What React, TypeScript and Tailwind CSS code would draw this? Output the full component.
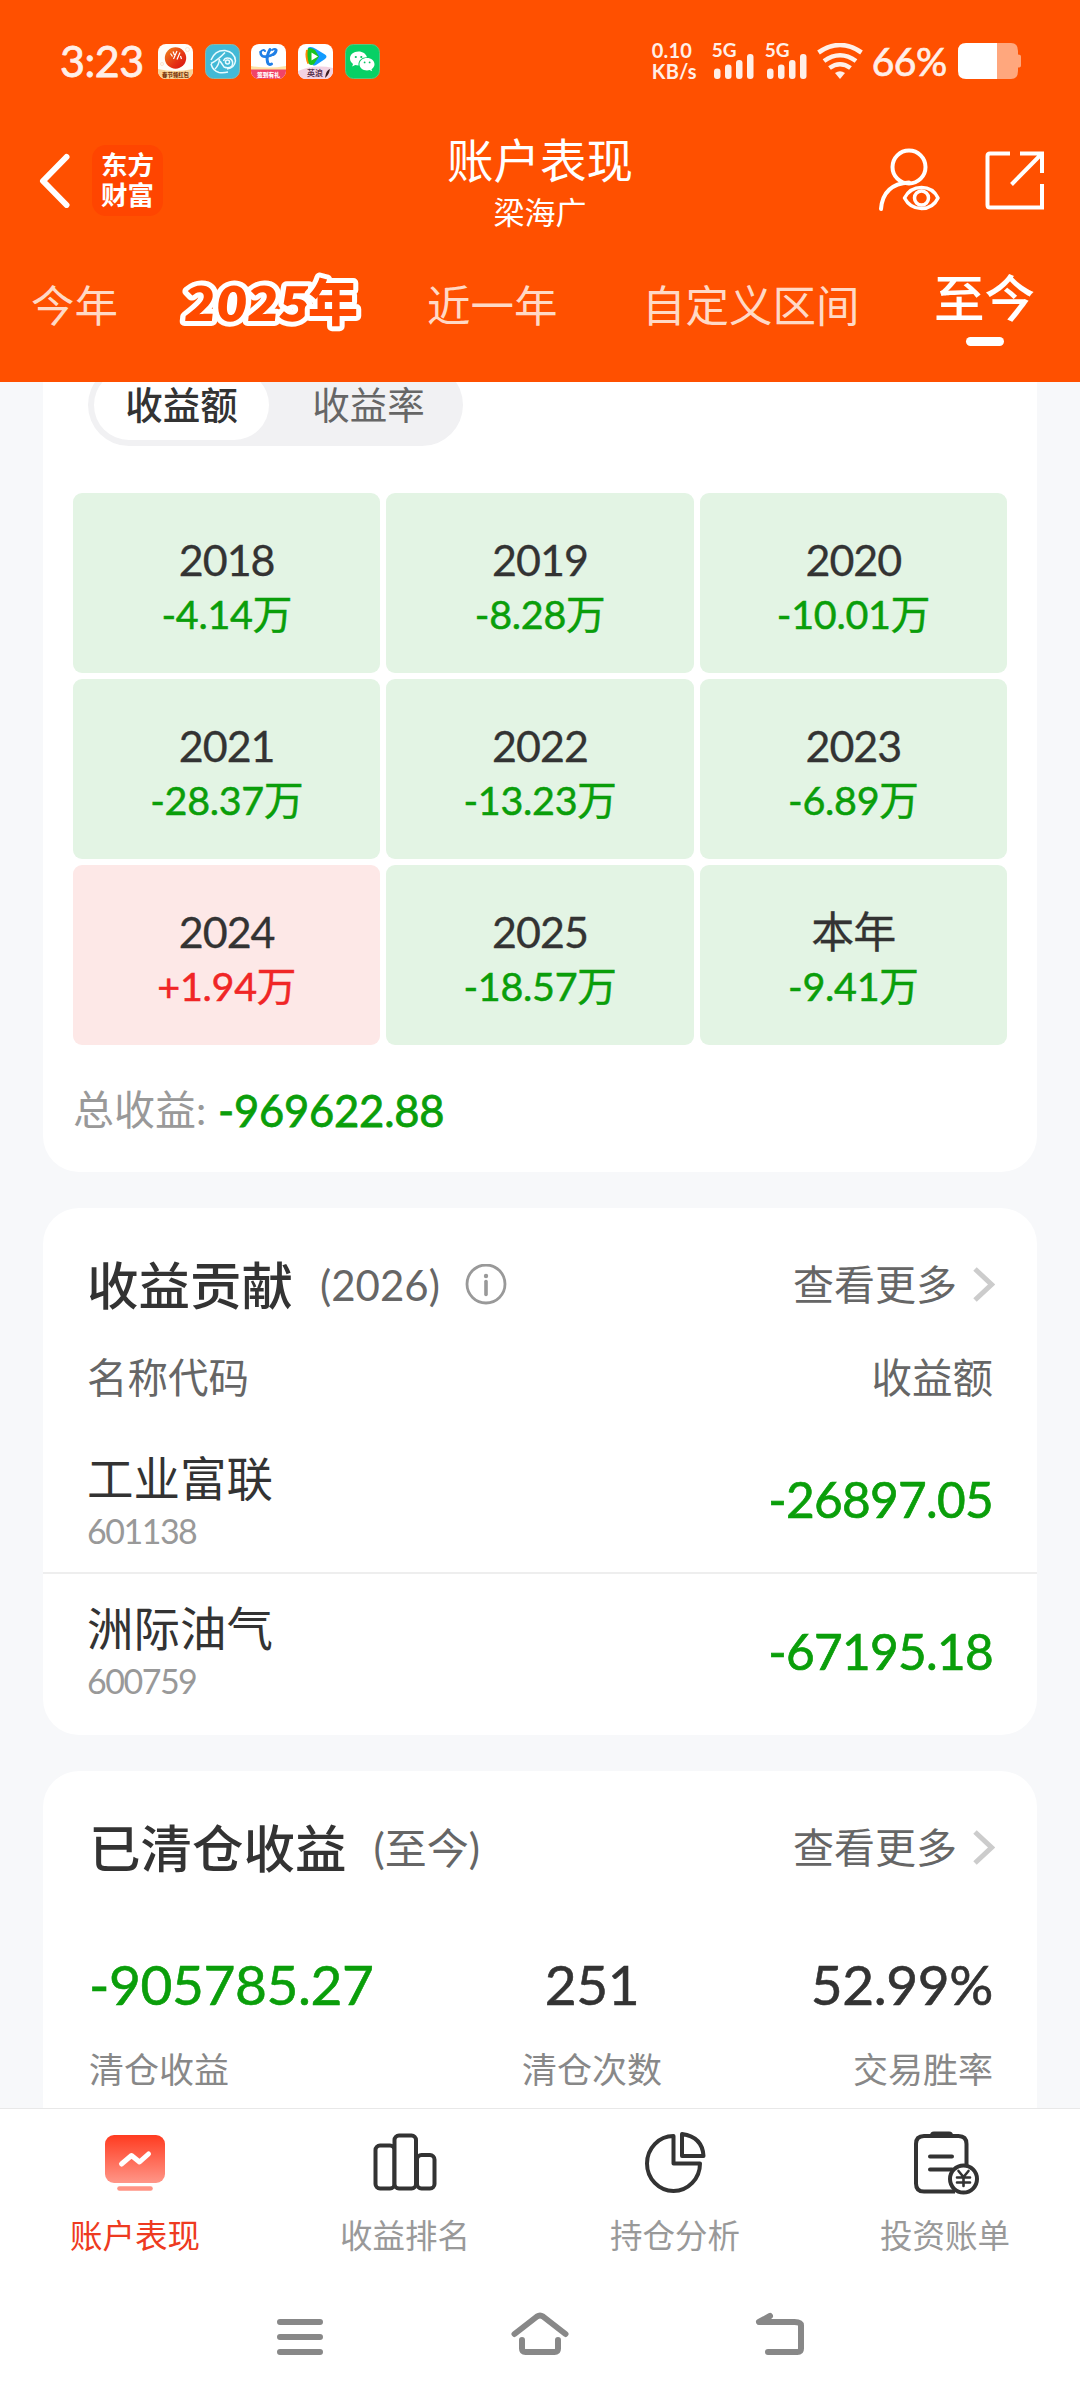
import type { ReactNode } from "react";

const years = [
  { year: "2018", value: "-4.14万" },
  { year: "2019", value: "-8.28万" },
  { year: "2020", value: "-10.01万" },
  { year: "2021", value: "-28.37万" },
  { year: "2022", value: "-13.23万" },
  { year: "2023", value: "-6.89万" },
  { year: "2024", value: "+1.94万" },
  { year: "2025", value: "-18.57万" },
  { year: "本年", value: "-9.41万" },
];

const stocks = [
  { name: "工业富联", code: "601138", value: "-26897.05" },
  { name: "洲际油气", code: "600759", value: "-67195.18" },
];

const AppIcons = () => (
  <div className="flex gap-[11.7px]">
    {/* 东方财富 */}
    <svg width="35" height="35" viewBox="0 0 35 35">
      <defs>
        <linearGradient id="ball" x1="0" y1="0" x2="1" y2="1">
          <stop offset="0" stopColor="#f0861c" />
          <stop offset="0.6" stopColor="#e63312" />
          <stop offset="1" stopColor="#d50f12" />
        </linearGradient>
        <clipPath id="tile">
          <rect width="35" height="35" rx="8" />
        </clipPath>
      </defs>
      <g clipPath="url(#tile)">
        <rect width="35" height="35" fill="#fffdf8" />
        <path d="M0 25Q17 29 35 25V35H0z" fill="#f9d295" />
        <circle cx="29.500" cy="5.500" r="2" fill="none" stroke="#fbe6d0" />
        <circle cx="4" cy="20" r="1.500" fill="none" stroke="#fbe6d0" />
        <circle cx="17.500" cy="14" r="10.700" fill="url(#ball)" />
        <path
          d="M12.500 9.500l2 3M15 7.500l1.500 3.500M19 7l-3.500 8M22 8.500l-3 7M22.500 12l1 3"
          stroke="#fff"
          strokeWidth="1.200"
          fill="none"
        />
        <text x="17.500" y="33" fontSize="5.400" fontWeight="900" fill="#7c3a10" textAnchor="middle">
          春节领红包
        </text>
      </g>
    </svg>
    <svg width="35" height="35" viewBox="0 0 35 35">
      <rect x=".5" y=".5" width="34" height="34" rx="8" fill="#43b9d6" stroke="#8cb8a8" />
      <g fill="none" stroke="#e8fbff" strokeWidth="1.500">
        <path d="M6 16Q10 6 20 6.500Q30 8 30.500 17Q29.500 24 22 25M6 20Q8 27 14 28.500Q19 29 23 28" />
        <path d="M6 19.500Q13 16 20 8.500M10 25Q14 21 14.500 15" />
        <path d="M15 17L19 23Q24 25 27 22Q29 17 25 14.500Q20 13 18.500 17" />
        <circle cx="22.500" cy="18" r="2" />
      </g>
    </svg>
    <svg width="35" height="35" viewBox="0 0 35 35">
      <g clipPath="url(#tile)">
        <rect width="35" height="35" fill="#fff" />
        <path d="M0 22Q17 25 35 22V28H0z" fill="#fde3a5" />
        <rect y="25.500" width="35" height="10" fill="#f04468" />
        <g fill="none" stroke="#1f7fe6" strokeLinecap="round">
          <path d="M9.500 8Q9.500 13.500 16 12.500Q24 11 25 6" strokeWidth="2.600" />
          <path d="M10 7.500Q12 5 14 7M21 6Q24 4 25.500 6Q25.500 9.500 22 11" strokeWidth="2" />
          <path d="M19 5.500Q15 12 16.500 18Q17.500 21.500 20.500 20" strokeWidth="3" />
        </g>
        <text x="17.500" y="33" fontSize="5.800" fontWeight="900" fill="#fff" textAnchor="middle">
          签到有礼
        </text>
      </g>
    </svg>
    <svg width="35" height="35" viewBox="0 0 35 35">
      <g clipPath="url(#tile)">
        <rect width="35" height="35" fill="#fff" />
        <path d="M0 27Q17 20 35 24V35H0z" fill="#f3d3e2" />
        <path d="M8 6Q6.500 13 9.500 20L12 19V5z" fill="#ff8a00" />
        <path d="M9.500 4.500Q12 1.500 18 5L27 10.500Q30 12.500 27 15L18 21Q13 23 15 18V8z" fill="#119bff" />
        <path d="M10 4.500Q12 3 17 6L21 12.500L16 20Q13 22 11 20Q8.500 12 10 4.500z" fill="#19c421" />
        <path d="M13.500 8.500L20 12.500L13.500 16.500z" fill="#fff" />
        <text x="17" y="32" fontSize="8" fontWeight="700" fill="#5a3550" textAnchor="middle">
          英浪
        </text>
        <path d="M27 34Q28 26 32 25Q31 31 27 34" fill="#3b1c20" />
      </g>
    </svg>
    {/* 微信 */}
    <svg width="35" height="35" viewBox="0 0 35 35">
      <rect x=".5" y=".5" width="34" height="34" rx="8" fill="#07d065" stroke="#5cc47c" />
      <path d="M13.500 7.500c-5 0-8.500 3.100-8.500 7 0 2.300 1.200 4.100 3 5.400l-.8 2.600 3-1.500c1 .3 2.100.5 3.300.5-.5-5.500 4-8.500 8.500-8.200-.8-3.500-4.300-5.800-8.500-5.800z" fill="#fff" />
      <path d="M22 14c-4.200 0-7.500 2.700-7.500 6.200s3.300 6.200 7.500 6.200c.9 0 1.800-.1 2.600-.4l2.600 1.300-.7-2.100c1.800-1.200 3-2.900 3-5 0-3.500-3.300-6.200-7.500-6.200z" fill="#fff" />
      <g fill="#07c160">
        <circle cx="10.800" cy="13" r="1.100" />
        <circle cx="16.300" cy="13" r="1.100" />
        <circle cx="19.600" cy="18.400" r=".9" />
        <circle cx="24.600" cy="18.400" r=".9" />
      </g>
    </svg>
  </div>
);

const Signal = () => (
  <div className="relative h-9 w-[42px]">
    <span className="absolute -top-px left-0 text-[19px] leading-4 font-bold">5G</span>
    <svg className="absolute top-0 left-0" width="42" height="36" viewBox="0 0 42 36" fill="currentColor">
      <rect x="2" y="25.500" width="6.500" height="10.500" rx="3" />
      <rect x="13" y="21.500" width="6.500" height="14.500" rx="3" />
      <rect x="24" y="17" width="6.500" height="19" rx="3" />
      <rect x="35" y="11" width="6.500" height="25" rx="3" />
    </svg>
  </div>
);

const StatusBar = () => (
  <div className="flex h-[122px] items-center pl-[60px] text-[#ffefe8]">
    <span className="w-[98px] text-[43px] leading-[44px] tracking-[-0.5px] [-webkit-text-stroke:0.8px]">3:23</span>
    <AppIcons />
    <div className="ml-[272px] w-[60px] text-[20px] leading-[21px] font-bold tracking-[0.2px]">
      <div>0.10</div>
      <div>KB/s</div>
    </div>
    <Signal />
    <div className="w-[11px]" />
    <Signal />
    <svg className="ml-[10px]" width="46" height="36" viewBox="0 0 46 36" fill="none" stroke="currentColor" strokeWidth="4.600">
      <path d="M1.500 9.500Q23-5.500 44.500 9.500M7 18Q23 6.500 39 18M12.500 25Q23 17.500 33.500 25" />
      <path d="M18 30Q23 26.500 28 30L23 36z" fill="currentColor" stroke="none" />
    </svg>
    <span className="ml-[9px] w-[86px] text-[39px] leading-[40px] tracking-[-0.5px] [-webkit-text-stroke:0.7px]">66%</span>
    <svg width="64" height="36" viewBox="0 0 64 36">
      <path d="M39 0h14q7 0 7 8v3.500q3 0 3 2v9q0 2-3 2V28q0 8-7 8H39z" fill="#ffa77d" />
      <path d="M39 0H8Q0 0 0 8v20q0 8 8 8h31z" fill="#fff" />
    </svg>
  </div>
);

// outlined campaign lettering used for the yearly review tab
const YearBadge = () => (
  <svg
    className="mt-[26px] mr-[58px] overflow-visible"
    width="190"
    height="80"
    viewBox="0 -10 190 80"
    fill="#ff4a00"
    stroke="#fff"
    strokeWidth="10"
    strokeLinejoin="round"
    fontWeight="900"
    fontFamily="Noto Sans CJK SC, sans-serif"
    paintOrder="stroke"
  >
    <text transform="skewX(-6)" x="9" y="47" fontSize="48" textLength="126" lengthAdjust="spacingAndGlyphs">
      2025
    </text>
    <text x="129" y="47" fontSize="50">
      年
    </text>
  </svg>
);

const Header = () => (
  <header className="h-[382px] shrink-0 bg-[#ff5000] text-white">
    <StatusBar />
    <div className="flex h-[116px] items-start">
      <div className="flex h-full w-[320px] items-center pl-[39px]">
        <svg width="32" height="56" viewBox="0 0 32 56" fill="none" stroke="currentColor" strokeWidth="6" strokeLinecap="round" strokeLinejoin="round">
          <path d="M27.500 5L4 29L27.500 53" />
        </svg>
        <div className="ml-[21px] flex size-[71px] flex-col items-center justify-center rounded-[14px] bg-[#ff4500] text-[26.500px] leading-[30px] font-bold">
          <span>东方</span>
          <span>财富</span>
        </div>
      </div>
      <div className="flex-1 pt-2 text-center">
        <div className="text-[46.500px] leading-[60px]">账户表现</div>
        <div className="mt-[4px] text-[31px] leading-9">梁海广</div>
      </div>
      <div className="flex h-full w-[320px] items-center justify-end pr-[36px]">
        <svg width="64" height="64" viewBox="0 0 64 64" fill="none" stroke="currentColor" strokeWidth="4" strokeLinecap="round">
          <circle cx="32" cy="19" r="16.500" />
          <path d="M4 61Q6 36 32 34.500" />
          <path d="M27.500 50Q33 39.500 44.500 39.500Q56 39.500 61 50Q56 60.500 44.500 60.500Q33 60.500 27.500 50z" strokeWidth="3.500" strokeLinejoin="round" />
          <circle cx="44.500" cy="50" r="7" strokeWidth="3.500" />
        </svg>
        <svg className="ml-[43px]" width="60" height="60" viewBox="0 0 60 60" fill="none" stroke="currentColor" strokeWidth="4">
          <path d="M26 3.500H6Q3.500 3.500 3.500 6V55Q3.500 57.500 6 57.500H58V34M36 3.500H58V23M57 4.500L27.500 34.500" />
        </svg>
      </div>
    </div>
    <nav className="flex h-[144px] items-start text-[43.500px] leading-[134px] whitespace-nowrap text-[#ffd9c6]">
      <span className="ml-[31px] w-[148px]">今年</span>
      <YearBadge />
      <span className="w-[215px]">近一年</span>
      <span className="w-[292px]">自定义区间</span>
      <div className="flex flex-col items-center pt-[30px] text-white">
        <span className="text-[50.500px] leading-[60px] font-medium">至今</span>
        <div className="mt-[9px] h-[9px] w-[38px] rounded-full bg-white" />
      </div>
    </nav>
  </header>
);

const YearCard = () => (
  <section className="h-[808px] rounded-b-[36px] bg-white px-[30px]">
    <div className="-mt-[18px] ml-[15px] flex h-[82px] w-[375px] rounded-full bg-[#f1f1f3] p-[6px] text-center text-[37.500px] leading-[69px]">
      <span className="w-[175px] rounded-full bg-white font-medium text-[#333]">收益额</span>
      <span className="ml-[12px] w-[175px] text-[#666]">收益率</span>
    </div>
    <div className="mt-[47px] grid grid-cols-3 gap-[6px] text-center">
      {years.map((item) => {
        const up = item.value.startsWith("+");
        return (
          <div key={item.year} className={`h-[180px] rounded-[9px] pt-[40px] ${up ? "bg-[#fde8e7]" : "bg-[#e3f4e4]"}`}>
            <div className="text-[43px] leading-[54px] tracking-[-1px] text-[#333] [-webkit-text-stroke:0.3px]">{item.year}</div>
            <div
              className={`text-[39.500px] leading-[54px] tracking-[-0.3px] [-webkit-text-stroke:0.5px] ${up ? "text-[#f02626]" : "text-[#0a9e0a]"}`}
            >
              {item.value}
            </div>
          </div>
        );
      })}
    </div>
    <div className="mt-[35px] flex items-center text-[41px] leading-[60px]">
      <span className="w-[145px] text-[#999]">总收益:</span>
      <span className="text-[43.500px] tracking-[-0.2px] text-[#0a9e0a] [-webkit-text-stroke:0.8px]">-969622.88</span>
    </div>
  </section>
);

const CardTitle = ({ title, note, info }: { title: string; note: string; info?: boolean }) => (
  <div className="flex h-[60px] items-center text-[#666]">
    <h2 className="text-[51.500px] leading-[60px] font-medium text-[#333]">{title}</h2>
    <span className="ml-[27px] text-[42px] leading-[60px]">{note}</span>
    {info && (
      <svg className="ml-[25px]" width="42" height="42" viewBox="0 0 42 42" fill="none" stroke="#999" strokeWidth="2.800">
        <circle cx="21" cy="20" r="19" />
        <path d="M21 17.500V30.500" strokeWidth="3.600" strokeLinecap="round" />
        <circle cx="21" cy="12" r="2.200" fill="#999" stroke="none" />
      </svg>
    )}
    <span className="ml-auto text-[41px] leading-[60px]">查看更多</span>
    <svg className="ml-[14px]" width="24" height="36" viewBox="0 0 24 36" fill="none" stroke="#ccc" strokeWidth="5">
      <path d="M4 2L20.500 17.500L4 33" />
    </svg>
  </div>
);

const ContributionCard = () => (
  <section className="mt-9 h-[527px] overflow-hidden rounded-[36px] bg-white">
    <div className="pt-[47px] pr-[42px] pl-[44px]">
      <CardTitle title="收益贡献" note="(2026)" info />
    </div>
    <div className="mt-[33px] flex justify-between px-[44px] text-[40.500px] leading-[60px] text-[#666]">
      <span>名称代码</span>
      <span>收益额</span>
    </div>
    {stocks.map((stock, i) => (
      <div
        key={stock.code}
        className={`flex h-[151px] items-center justify-between px-[44px] ${i > 0 ? "border-t-2 border-[#eee]" : "mt-[13px]"}`}
      >
        <div className={i > 0 ? "pt-1" : "pt-2"}>
          <div className="text-[46.500px] leading-[60px] text-[#333]">{stock.name}</div>
          <div className="text-[34px] leading-[46px] tracking-[-1.500px] text-[#999]">{stock.code}</div>
        </div>
        <span className="pt-1 text-[49.500px] leading-[60px] tracking-[-0.7px] text-[#0a9e0a] [-webkit-text-stroke:0.7px]">
          {stock.value}
        </span>
      </div>
    ))}
  </section>
);

const ClosedCard = () => (
  <section className="mt-9 h-[400px] rounded-t-[36px] bg-white pt-[47px] pr-[42px] pl-[46px]">
    <CardTitle title="已清仓收益" note="(至今)" />
    <div className="mt-[76px] grid grid-cols-3 pr-[2px] text-[55px] leading-[60px] tracking-[-0.4px] text-[#333] [-webkit-text-stroke:0.6px]">
      <span className="text-[#0a9e0a]">-905785.27</span>
      <span className="pl-[102px] text-center">251</span>
      <span className="text-right">52.99%</span>
    </div>
    <div className="mt-[35px] grid grid-cols-3 pr-[2px] text-[35px] leading-[40px] text-[#888]">
      <span>清仓收益</span>
      <span className="pl-[102px] text-center">清仓次数</span>
      <span className="text-right">交易胜率</span>
    </div>
  </section>
);

const TabItem = ({ label, active, children }: { label: string; active?: boolean; children: ReactNode }) => (
  <div className={`flex w-[270px] flex-col items-center pt-[20px] text-[32.500px] leading-[46px] ${active ? "text-[#ee3a20]" : "text-[#999]"}`}>
    <svg width="68" height="68" viewBox="0 0 68 68" fill="none" stroke="#333" strokeWidth="4">
      {children}
    </svg>
    <span className="mt-[16px]">{label}</span>
  </div>
);

const TabBar = () => (
  <div className="flex h-[152px] border-t border-[#e8e8e8]">
    <TabItem label="账户表现" active>
      <defs>
        <linearGradient id="screen" x1="0" y1="0" x2="0" y2="1">
          <stop offset="0" stopColor="#ff3b20" />
          <stop offset="1" stopColor="#ff9688" />
        </linearGradient>
      </defs>
      <rect x="4" y="6" width="60" height="48" rx="9" fill="url(#screen)" stroke="none" />
      <path d="M20.500 35L30.500 26.500L38.500 33L47.500 25" stroke="#fff" strokeWidth="5" strokeLinecap="round" strokeLinejoin="round" />
      <path d="M18.500 59.500H49.500" stroke="#ff9485" strokeWidth="4.600" strokeLinecap="round" />
    </TabItem>
    <TabItem label="收益排名">
      <rect x="4.500" y="16.500" width="19" height="43" rx="4.500" />
      <rect x="46" y="26" width="17.500" height="33.500" rx="4.500" />
      <rect x="23.500" y="6.500" width="21.500" height="53" rx="4.500" fill="#fff" />
    </TabItem>
    <TabItem label="持仓分析">
      <path d="M32.500 7A26.500 27.500 0 1 0 59 34.500H32.500z" strokeLinejoin="round" />
      <path d="M41 5V27H62.500Q61.500 8 41 5z" strokeLinejoin="round" />
    </TabItem>
    <TabItem label="投资账单">
      <path d="M44 62.500H13Q5 62.500 5 54.500V15Q5 7 13 7H47.500Q55.500 7 55.500 15V36" />
      <path d="M20 6.500Q20 3.500 23 3.500H38Q41 3.500 41 6.500z" fill="#333" strokeWidth="2" />
      <path d="M19 27.500H41M19 40.500H41" strokeLinecap="round" />
      <circle cx="52.500" cy="50" r="13.500" fill="#fff" />
      <path d="M47.500 42L52.500 48L57.500 42M52.500 48V57M46 48.500H59M46 53.500H59" strokeWidth="2.600" strokeLinecap="round" />
    </TabItem>
  </div>
);

const SystemNav = () => (
  <div className="flex h-[140px] items-center justify-center gap-[180px] pt-[8px]">
    {[
      <path key="menu" d="M10 14H50M10 29H50M10 44H50" />,
      <g key="home">
        <path d="M4.500 26L27 8.500Q30 6.500 33 8.500L55.500 26" />
        <path d="M12 32V40.500Q12 44 15.500 44H44.500Q48 44 48 40.500V32" />
      </g>,
      <path key="back" d="M20 8L9 14H44.500Q51 14 51 17.500V40.500Q51 44 47.500 44H18" />,
    ].map((shape, i) => (
      <svg key={i} width="60" height="52" viewBox="0 0 60 52" fill="none" stroke="#888" strokeWidth="6" strokeLinecap="round" strokeLinejoin="round">
        {shape}
      </svg>
    ))}
  </div>
);

export default function App() {
  return (
    <div className="flex h-[2400px] w-[1080px] flex-col overflow-hidden bg-white font-['Lato','Noto_Sans_CJK_SC',sans-serif]">
      <Header />
      <main className="h-[1726px] shrink-0 overflow-hidden bg-[#f7f8fa] px-[43px]">
        {/* flow-root keeps the half-scrolled switch inside the card */}
        <div className="flow-root">
          <YearCard />
          <ContributionCard />
          <ClosedCard />
        </div>
      </main>
      <TabBar />
      <SystemNav />
    </div>
  );
}
